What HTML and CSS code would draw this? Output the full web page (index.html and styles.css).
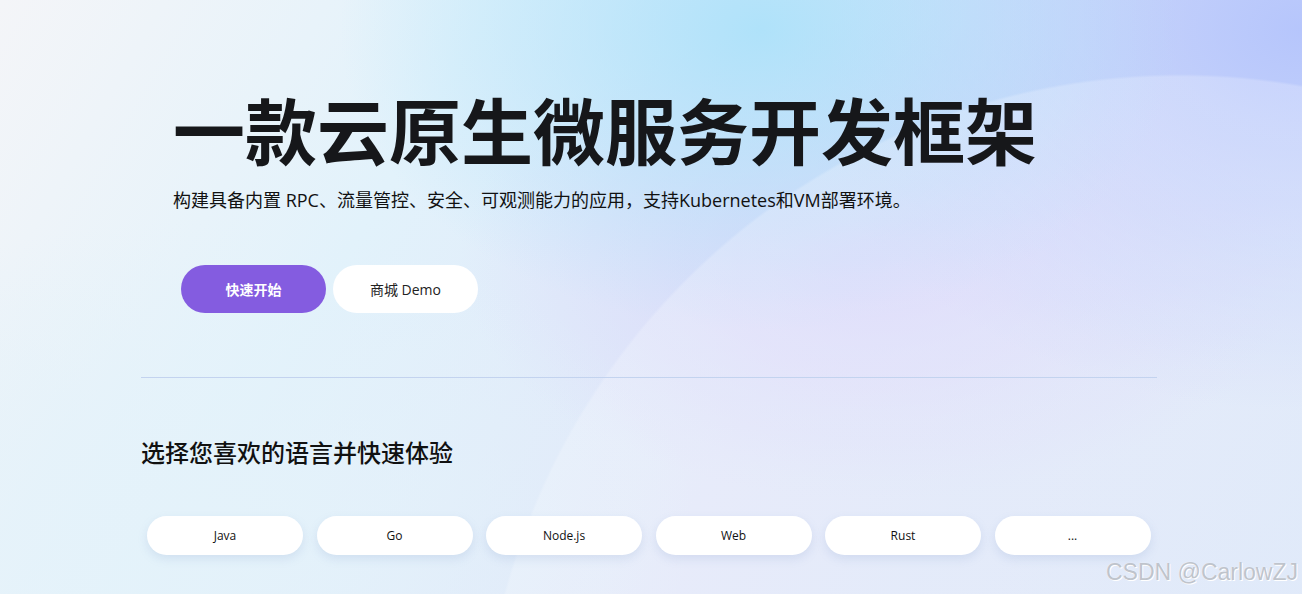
FILE: index.html
```html
<!DOCTYPE html>
<html>
  <head>
    <meta name="viewport" content="width=device-width, initial-scale=1.0">
    <title>云原生微服务开发框架</title>
    <link rel="stylesheet" href="styles.css">
  </head>
  <body>
    <div class="page">
      <div class="hero">
        <h1 class="hero-title">一款云原生微服务开发框架</h1>
        <p class="hero-desc">构建具备内置 RPC、流量管控、安全、可观测能力的应用，支持Kubernetes和VM部署环境。</p>
        <div class="hero-actions">
          <a class="btn btn-primary">快速开始</a>
          <a class="btn btn-light">商城 Demo</a>
        </div>
      </div>
      <div class="divider"></div>
      <h2 class="lang-title">选择您喜欢的语言并快速体验</h2>
      <div class="lang-list">
        <a class="lang-pill">Java</a>
        <a class="lang-pill">Go</a>
        <a class="lang-pill">Node.js</a>
        <a class="lang-pill">Web</a>
        <a class="lang-pill">Rust</a>
        <a class="lang-pill">...</a>
      </div>
    </div>
    <div class="watermark">CSDN @CarlowZJ</div>
  </body>
</html>
```

FILE: styles.css
```css
html,
body {
  margin: 0;
  height: 100%;
}

body {
  font-family: "Open Sans", "Noto Sans CJK SC", sans-serif;
  color: #111;
  overflow: hidden;
  position: relative;
  background:
    radial-gradient(circle 700px at 1180px 774px, rgba(255, 255, 255, 0.22) 99.6%, rgba(255, 255, 255, 0) 100%),
    radial-gradient(ellipse 420px 300px at 760px 30px, rgba(170, 225, 250, 0.9), rgba(170, 225, 250, 0) 100%),
    radial-gradient(ellipse 520px 380px at 1300px 30px, rgba(180, 196, 252, 0.95), rgba(180, 196, 252, 0) 100%),
    radial-gradient(ellipse 420px 240px at 880px 260px, rgba(214, 210, 250, 0.85), rgba(214, 210, 250, 0) 100%),
    radial-gradient(ellipse 500px 300px at 200px 520px, rgba(228, 242, 250, 1), rgba(228, 242, 250, 0) 100%),
    linear-gradient(120deg, #f4f5f8 0%, #e2f2fb 30%, #e0e6f9 60%, #d8e4f8 100%);
}

.page {
  width: 1016px;
  margin-left: 141px;
  padding-top: 84px;
}

.hero {
  padding-left: 32px;
}

.hero-title {
  margin: 0;
  font-family: "Noto Sans CJK SC", sans-serif;
  font-size: 72px;
  font-weight: 700;
  line-height: 88px;
  color: #16171a;
  white-space: nowrap;
}

.hero-desc {
  margin: 15px 0 0;
  font-family: "Open Sans", "Noto Sans CJK SC", sans-serif;
  font-size: 18px;
  line-height: 26px;
  color: #111;
}

.hero-actions {
  display: flex;
  gap: 7px;
  margin-top: 52px;
  padding-left: 8px;
}

.btn {
  width: 145px;
  height: 48px;
  border-radius: 24px;
  display: flex;
  align-items: center;
  justify-content: center;
  font-size: 14px;
  cursor: pointer;
}

.btn-primary {
  background-color: #845ce0;
  color: #fff;
  font-weight: 600;
}

.btn-light {
  background-color: #fff;
  color: #222;
}

.divider {
  height: 1px;
  background-color: #c3d3ef;
  margin-top: 64px;
}

.lang-title {
  margin: 58px 0 0;
  font-family: "Noto Sans CJK SC", sans-serif;
  font-size: 24px;
  font-weight: 500;
  line-height: 32px;
  color: #111;
}

.lang-list {
  display: flex;
  gap: 13.5px;
  margin-top: 48px;
  padding-left: 6px;
}

.lang-pill {
  width: 156px;
  height: 39px;
  border-radius: 20px;
  background-color: #fff;
  box-shadow: 0 4px 10px rgba(120, 150, 200, 0.18);
  display: flex;
  align-items: center;
  justify-content: center;
  font-size: 12px;
  color: #111;
  cursor: pointer;
}

.watermark {
  position: absolute;
  right: 4px;
  bottom: 8px;
  font-family: "Liberation Sans", sans-serif;
  font-size: 23px;
  color: #bfc4cc;
  text-shadow: 0 0 1px #fff, 1px 1px 0 #fff;
}
```
